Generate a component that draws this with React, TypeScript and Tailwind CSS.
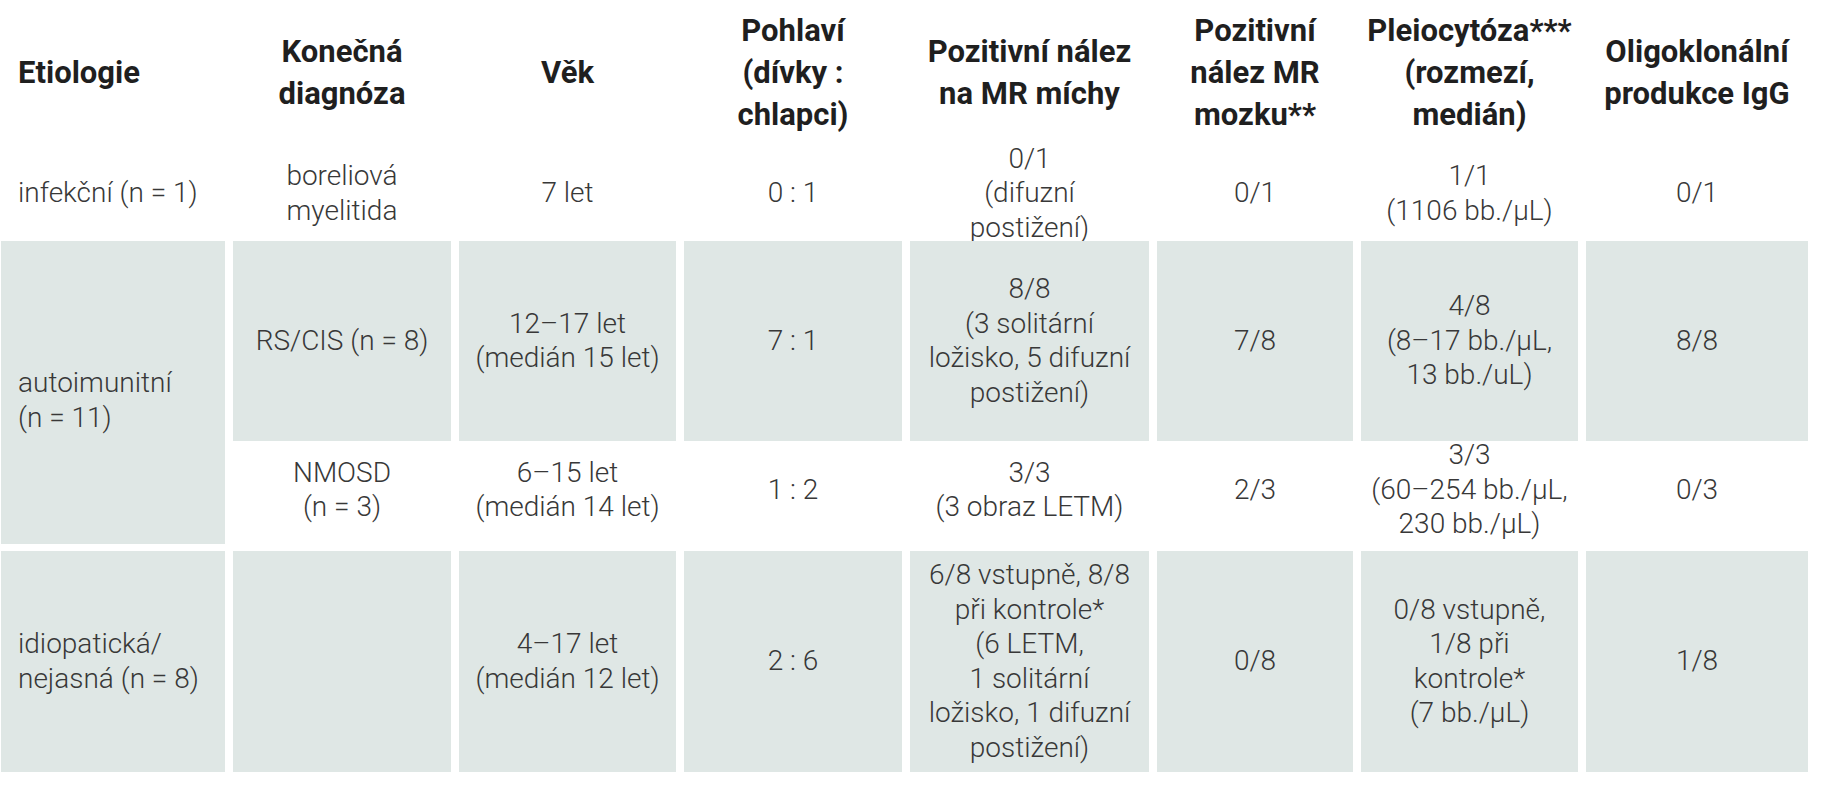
const head = "flex items-center justify-center text-center font-bold text-[31px] leading-[42px] text-[#1f1f1f]";
const cell = "flex items-center justify-center text-center font-light text-[28px] leading-[34.5px] text-[#383838]";
const grey = "bg-[#dfe7e5]";
const low = `${cell} pb-[12px]`;

function Lines({ items }: { items: string[] }) {
  return (
    <div>
      {items.map((t, i) => (
        <div key={i}>{t}</div>
      ))}
    </div>
  );
}

export default function App() {
  return (
    <div className="w-[1830px] h-[800px] bg-white pl-[1px]" style={{ fontFamily: 'Roboto, "Open Sans", sans-serif' }}>
      <div className="grid grid-cols-[224px_218px_217px_218px_239px_196px_217px_222px] grid-rows-[146px_81px_200px_96px_221px] gap-x-[8px] gap-y-[7px]">
        {/* header */}
        <div className={`${head} justify-start pl-[17px] text-left`}>Etiologie</div>
        <div className={head}><Lines items={["Konečná", "diagnóza"]} /></div>
        <div className={head}>Věk</div>
        <div className={head}><Lines items={["Pohlaví", "(dívky :", "chlapci)"]} /></div>
        <div className={head}><Lines items={["Pozitivní nález", "na MR míchy"]} /></div>
        <div className={head}><Lines items={["Pozitivní", "nález MR", "mozku**"]} /></div>
        <div className={head}><Lines items={["Pleiocytóza***", "(rozmezí,", "medián)"]} /></div>
        <div className={head}><Lines items={["Oligoklonální", "produkce IgG"]} /></div>

        {/* infekční */}
        <div className={`${cell} justify-start pl-[17px] text-left`}>infekční (n = 1)</div>
        <div className={cell}><Lines items={["boreliová", "myelitida"]} /></div>
        <div className={cell}>7 let</div>
        <div className={cell}>0 : 1</div>
        <div className={cell}><Lines items={["0/1", "(difuzní", "postižení)"]} /></div>
        <div className={cell}>0/1</div>
        <div className={cell}><Lines items={["1/1", "(1106 bb./µL)"]} /></div>
        <div className={cell}>0/1</div>

        {/* autoimunitní */}
        <div className={`${cell} ${grey} row-span-2 justify-start pl-[17px] pt-[16px] text-left`}>
          <Lines items={["autoimunitní", "(n = 11)"]} />
        </div>
        <div className={`${cell} ${grey}`}>RS/CIS (n = 8)</div>
        <div className={`${cell} ${grey}`}><Lines items={["12–17 let", "(medián 15 let)"]} /></div>
        <div className={`${cell} ${grey}`}>7 : 1</div>
        <div className={`${cell} ${grey}`}><Lines items={["8/8", "(3 solitární", "ložisko, 5 difuzní", "postižení)"]} /></div>
        <div className={`${cell} ${grey}`}>7/8</div>
        <div className={`${cell} ${grey}`}><Lines items={["4/8", "(8–17 bb./µL,", "13 bb./uL)"]} /></div>
        <div className={`${cell} ${grey}`}>8/8</div>

        <div className={low}><Lines items={["NMOSD", "(n = 3)"]} /></div>
        <div className={low}><Lines items={["6–15 let", "(medián 14 let)"]} /></div>
        <div className={low}>1 : 2</div>
        <div className={low}><Lines items={["3/3", "(3 obraz LETM)"]} /></div>
        <div className={low}>2/3</div>
        <div className={low}><Lines items={["3/3", "(60–254 bb./µL,", "230 bb./µL)"]} /></div>
        <div className={low}>0/3</div>

        {/* idiopatická */}
        <div className={`${cell} ${grey} justify-start pl-[17px] text-left`}>
          <Lines items={["idiopatická/", "nejasná (n = 8)"]} />
        </div>
        <div className={`${cell} ${grey}`}></div>
        <div className={`${cell} ${grey}`}><Lines items={["4–17 let", "(medián 12 let)"]} /></div>
        <div className={`${cell} ${grey}`}>2 : 6</div>
        <div className={`${cell} ${grey}`}>
          <Lines items={["6/8 vstupně, 8/8", "při kontrole*", "(6 LETM,", "1 solitární", "ložisko, 1 difuzní", "postižení)"]} />
        </div>
        <div className={`${cell} ${grey}`}>0/8</div>
        <div className={`${cell} ${grey}`}><Lines items={["0/8 vstupně,", "1/8 při", "kontrole*", "(7 bb./µL)"]} /></div>
        <div className={`${cell} ${grey}`}>1/8</div>
      </div>
    </div>
  );
}
